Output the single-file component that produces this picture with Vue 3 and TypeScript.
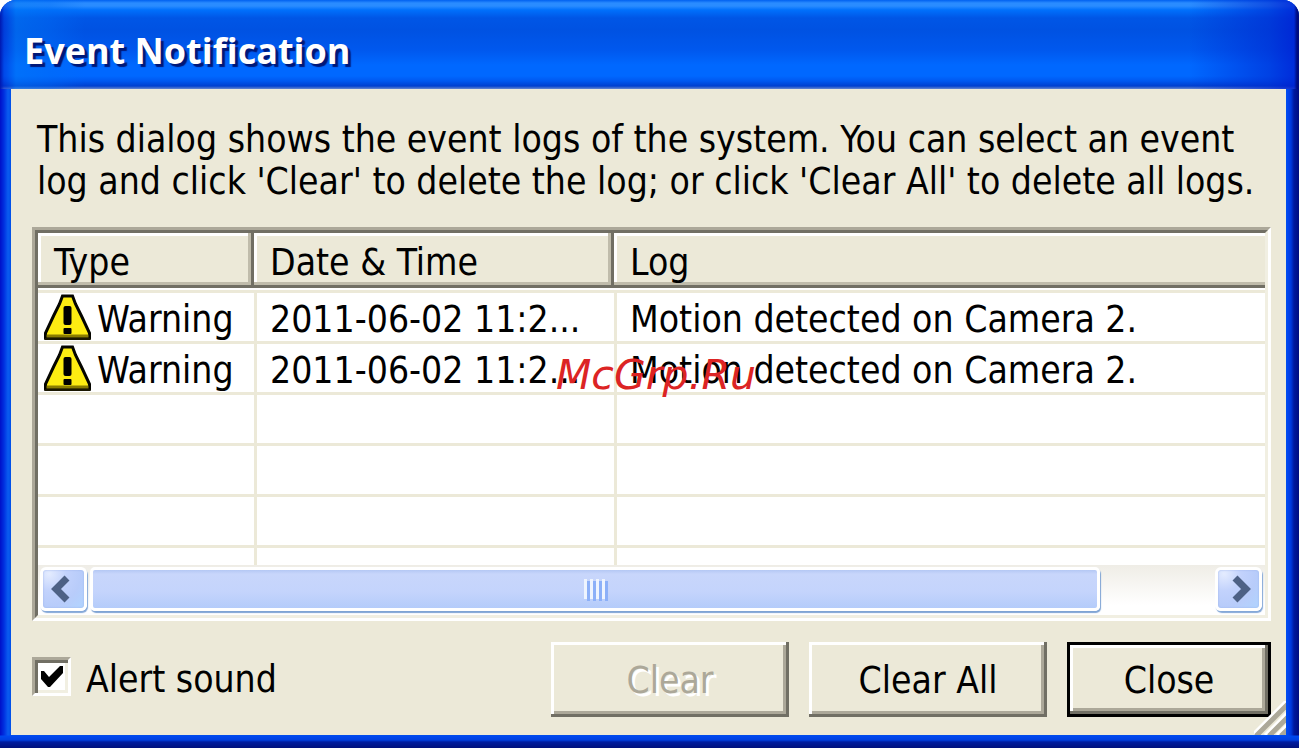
<script setup lang="ts">
import { ref } from 'vue'

interface EventLog {
  id: number
  type: string
  time: string
  log: string
}

const events = ref<EventLog[]>([
  { id: 1, type: 'Warning', time: '2011-06-02 11:2...', log: 'Motion detected on Camera 2.' },
  { id: 2, type: 'Warning', time: '2011-06-02 11:2...', log: 'Motion detected on Camera 2.' },
])
const emptyRows = 4
const alertSound = ref(true)
</script>

<template>
  <main class="window">
    <header class="titlebar">
      <h1>Event Notification</h1>
    </header>

    <div class="client">
      <p class="intro">
        This dialog shows the event logs of the system. You can select an event<br />
        log and click 'Clear' to delete the log; or click 'Clear All' to delete all logs.
      </p>

      <section class="list">
        <div class="viewport">
          <table>
            <colgroup>
              <col class="col-type" />
              <col class="col-time" />
              <col />
            </colgroup>
            <thead>
              <tr>
                <th scope="col">Type</th>
                <th scope="col">Date &amp; Time</th>
                <th scope="col" class="last">Log</th>
              </tr>
            </thead>
            <tbody>
              <tr v-for="e in events" :key="e.id">
                <td>
                  <div class="type">
                    <svg class="warn" viewBox="0 0 48 46" aria-hidden="true">
                      <path d="M19 2H29L32 10L38 22L46 39V44H2V39L10 22L16 10Z" fill="#fdec12" stroke="#050500" stroke-width="3" />
                      <path d="M3 42H45" stroke="#8a7c00" stroke-width="3" />
                      <path d="M1 45H47" stroke="#1a1700" stroke-width="2" />
                      <rect x="20" y="12" width="8" height="19" rx="2" />
                      <rect x="20" y="34" width="8" height="6" rx="1" />
                    </svg>
                    <span>{{ e.type }}</span>
                  </div>
                </td>
                <td>{{ e.time }}</td>
                <td>{{ e.log }}</td>
              </tr>
              <tr v-for="n in emptyRows" :key="'empty' + n">
                <td></td>
                <td></td>
                <td></td>
              </tr>
            </tbody>
          </table>
        </div>

        <div class="scrollbar">
          <button type="button" class="arrow" aria-label="Scroll left">
            <svg viewBox="0 0 20 28" aria-hidden="true"><path d="M16 3L5 14L16 25" /></svg>
          </button>
          <div class="track">
            <div class="thumb"><i></i><i></i><i></i><i></i></div>
          </div>
          <button type="button" class="arrow" aria-label="Scroll right">
            <svg viewBox="0 0 20 28" aria-hidden="true"><path d="M4 3L15 14L4 25" /></svg>
          </button>
        </div>
      </section>

      <footer class="actions">
        <label class="check">
          <span class="box">
            <input v-model="alertSound" type="checkbox" />
            <svg v-if="alertSound" viewBox="0 0 24 24" aria-hidden="true">
              <path d="M1 6H4L9 12L20 1H23V8L10 22H8L1 14Z" />
            </svg>
          </span>
          <span>Alert sound</span>
        </label>
        <button type="button" class="btn" disabled>Clear</button>
        <button type="button" class="btn">Clear All</button>
        <button type="button" class="btn default">Close</button>
      </footer>

      <svg class="grip" viewBox="0 0 32 34" aria-hidden="true">
        <g stroke="#ffffff" stroke-width="3">
          <path d="M-2 34L34 -2" /><path d="M11 34L34 11" /><path d="M23 34L34 23" />
        </g>
        <g stroke="#aca899" stroke-width="5">
          <path d="M2 35L35 2" /><path d="M15 35L35 15" /><path d="M27 35L35 27" />
        </g>
      </svg>
    </div>

    <span class="watermark">McGrp.Ru</span>
  </main>
</template>

<style>
body {
  margin: 0;
  background: #ffffff;
}
</style>

<style scoped>
* {
  box-sizing: border-box;
}

.window {
  position: relative;
  display: flex;
  flex-direction: column;
  min-height: 100vh;
  overflow: hidden;
  border-radius: 16px 16px 0 0;
  padding: 0 13px 13px 11px;
  color: #000000;
  font: 37px/42px "DejaVu Sans Condensed", "DejaVu Sans", sans-serif;
  background:
    linear-gradient(to bottom, transparent 0, transparent calc(100% - 13px), #0048f0 calc(100% - 12px), #0040e0 calc(100% - 8px), #001ca0 calc(100% - 6px), #00107c 100%),
    linear-gradient(to right, #0010c8 0, #0030e0 4px, #0a5cf0 8px, #0050e8 11px, #0050e8 calc(100% - 13px), #0048f4 calc(100% - 12px), #0038dc calc(100% - 8px), #0018a0 calc(100% - 5px), #000c80 100%);
}

.titlebar {
  display: flex;
  align-items: center;
  height: 89px;
  margin: 0 -13px 0 -11px;
  padding: 13px 24px 0;
  background:
    linear-gradient(to right, #0018b0 0, rgba(0, 40, 210, 0.5) 4px, rgba(0, 120, 245, 0.5) 16px, rgba(0, 110, 245, 0.4) 50px, transparent 85px, transparent calc(100% - 110px), rgba(0, 40, 210, 0.6) calc(100% - 30px), rgba(0, 30, 210, 0.8) calc(100% - 5px), #000c80 calc(100% - 2px)),
    linear-gradient(to bottom, #0060f0 0, #2a8cff 3px, #2a8cff 6px, #0070fc 10px, #0056e6 18px, #0052e2 30px, #0058ee 50px, #0068ff 65px, #0068ff 76px, #0058f0 81px, #0040d0 86px, #6888d0 89px);
}

h1 {
  margin: 0;
  color: #ffffff;
  font: bold 36px/44px "Open Sans", "Noto Sans", sans-serif;
  text-shadow: 3px 3px 1px #001878;
}

.client {
  position: relative;
  display: flex;
  flex: 1;
  flex-direction: column;
  padding: 30px 15px 18px 21px;
  background: #ece9d8;
}

.intro {
  margin: 0 0 24px 5px;
  white-space: nowrap;
}

.list {
  display: flex;
  flex: 1;
  flex-direction: column;
  border: 3px solid;
  border-color: #aca899 #ffffff #ffffff #aca899;
}

.viewport {
  flex: 1 1 0;
  min-height: 120px;
  overflow: hidden;
  border: 3px solid;
  border-color: #716f64 #f1efe2 transparent #716f64;
  border-bottom: 0;
  background: #ffffff;
}

table {
  width: 100%;
  border-collapse: separate;
  border-spacing: 0;
  table-layout: fixed;
}

.col-type {
  width: 216px;
}

.col-time {
  width: 360px;
}

th {
  height: 57px;
  padding: 4px 16px 0;
  border-bottom: 2px solid #ffffff;
  background: #ece9d8;
  box-shadow: inset -3px -3px #716f64, inset -6px -6px #c0bcab, inset 3px 3px #ffffff;
  font-weight: normal;
  text-align: left;
}

th.last {
  box-shadow: inset 0 -3px #716f64, inset 0 -6px #c0bcab, inset 3px 3px #ffffff;
}

td {
  height: 51px;
  padding: 5px 0 0 13px;
  border-bottom: 3px solid #ece9d8;
  border-left: 3px solid #ece9d8;
  white-space: nowrap;
}

td:first-child {
  padding: 0 0 0 5px;
  border-left: 0;
}

tbody tr:first-child td {
  height: 54px;
  border-top: 3px solid #ece9d8;
}

.type {
  display: flex;
  align-items: center;
  gap: 5px;
}

.type span {
  padding-top: 5px;
}

.warn {
  flex: none;
  width: 49px;
  height: 46px;
}

.scrollbar {
  display: flex;
  height: 53px;
  padding: 2px 3px 4px 2px;
  border: 3px solid;
  border-color: #f1efe2 #f1efe2 #f1efe2 #716f64;
  border-top: 0;
  background: linear-gradient(#efede6, #ffffff 80%);
}

.arrow {
  display: flex;
  align-items: center;
  justify-content: center;
  flex: none;
  width: 47px;
  height: 44px;
  padding: 0 6px 0 0;
  border: 3px solid #ffffff;
  border-radius: 6px;
  background: radial-gradient(circle at 15% 10%, #e4ecff 0, #c2d2fc 35%, #b8ccfa 65%, #b0d4ff 100%);
  box-shadow: 1px 2px 1px #84a8d8, inset 0 0 2px #98b0e8;
}

.arrow:last-child {
  padding: 0 0 0 4px;
}

.arrow svg {
  width: 20px;
  height: 28px;
  fill: none;
  stroke: #4d6185;
  stroke-width: 7;
}

.track {
  flex: 1;
  padding: 0 3px;
}

.thumb {
  display: flex;
  align-items: center;
  justify-content: center;
  gap: 3px;
  width: 90%;
  height: 44px;
  border: 3px solid #ffffff;
  border-radius: 5px;
  background: linear-gradient(#b4c8f4 0, #c8d6fb 4px, #c4d4fc 22px, #b4ccfa 100%);
  box-shadow: 1px 2px 1px #7fa4d4;
}

.thumb i {
  width: 3px;
  height: 20px;
  background: #eef4fe;
  box-shadow: 3px 2px #8cb0f8;
}

.actions {
  display: flex;
  align-items: center;
  gap: 20px;
  height: 75px;
  margin-top: 21px;
}

.check {
  display: flex;
  align-items: center;
  gap: 15px;
  margin-right: auto;
}

.box {
  position: relative;
  display: flex;
  margin-bottom: 6px;
}

.box input {
  width: 39px;
  height: 39px;
  margin: 0;
  border: 3px solid;
  border-color: #aca899 #ffffff #ffffff #aca899;
  background: #ffffff;
  box-shadow: inset 3px 3px #716f64, inset -3px -3px #f1efe2;
  appearance: none;
}

.box svg {
  position: absolute;
  top: 8px;
  left: 8px;
  width: 24px;
  height: 24px;
  pointer-events: none;
}

.btn {
  width: 238px;
  height: 75px;
  padding: 2px 0 0;
  border: 0;
  background: #ece9d8;
  box-shadow: inset -3px -3px #716f64, inset 3px 3px #ffffff, inset -6px -6px #aca899;
  color: #000000;
  font: inherit;
}

.btn:disabled {
  color: #aca899;
  text-shadow: 3px 3px #ffffff;
}

.btn.default {
  width: 204px;
  border: 3px solid #000000;
}

.grip {
  position: absolute;
  right: 0;
  bottom: 0;
  width: 32px;
  height: 34px;
}

.watermark {
  position: absolute;
  top: 351px;
  left: 556px;
  color: #dc2424;
  font: italic 41px/48px "DejaVu Sans", sans-serif;
  pointer-events: none;
}
</style>
